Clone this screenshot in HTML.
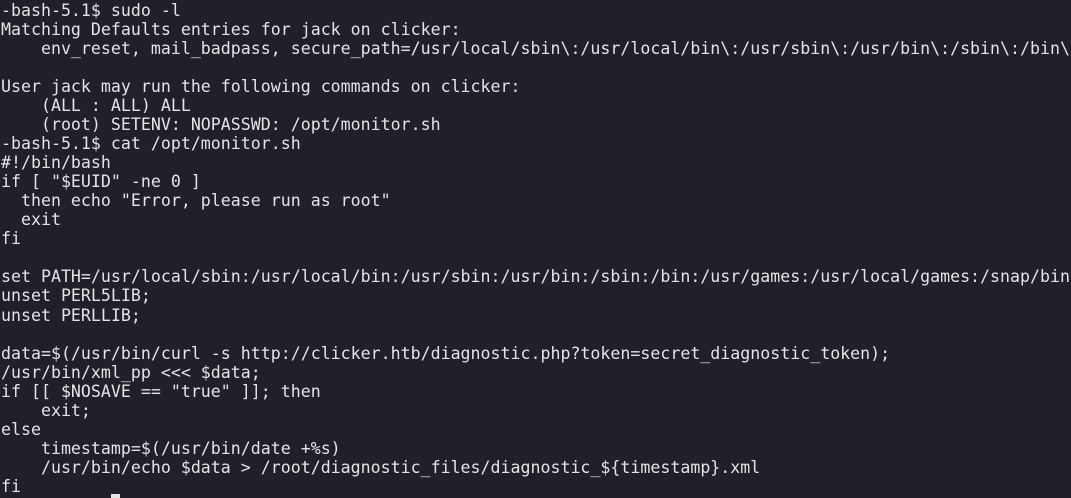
<!DOCTYPE html><html><head><style>
html,body{margin:0;padding:0;background:#1f2029;width:1071px;height:498px;overflow:hidden}
pre{margin:0;position:absolute;left:1px;top:0.5px;font-family:"DejaVu Sans Mono","Liberation Mono",monospace;font-size:16.6px;line-height:19.06px;color:#e4e4e4;white-space:pre}
.c{position:absolute;left:111px;top:494px;width:9px;height:4px;background:#e4e4e4}
</style></head><body><pre>-bash-5.1$ sudo -l
Matching Defaults entries for jack on clicker:
    env_reset, mail_badpass, secure_path=/usr/local/sbin\:/usr/local/bin\:/usr/sbin\:/usr/bin\:/sbin\:/bin\

User jack may run the following commands on clicker:
    (ALL : ALL) ALL
    (root) SETENV: NOPASSWD: /opt/monitor.sh
-bash-5.1$ cat /opt/monitor.sh
#!/bin/bash
if [ "$EUID" -ne 0 ]
  then echo "Error, please run as root"
  exit
fi

set PATH=/usr/local/sbin:/usr/local/bin:/usr/sbin:/usr/bin:/sbin:/bin:/usr/games:/usr/local/games:/snap/bin
unset PERL5LIB;
unset PERLLIB;

data=$(/usr/bin/curl -s http://clicker.htb/diagnostic.php?token=secret_diagnostic_token);
/usr/bin/xml_pp &lt;&lt;&lt; $data;
if [[ $NOSAVE == "true" ]]; then
    exit;
else
    timestamp=$(/usr/bin/date +%s)
    /usr/bin/echo $data &gt; /root/diagnostic_files/diagnostic_${timestamp}.xml
fi</pre><div class="c"></div></body></html>
